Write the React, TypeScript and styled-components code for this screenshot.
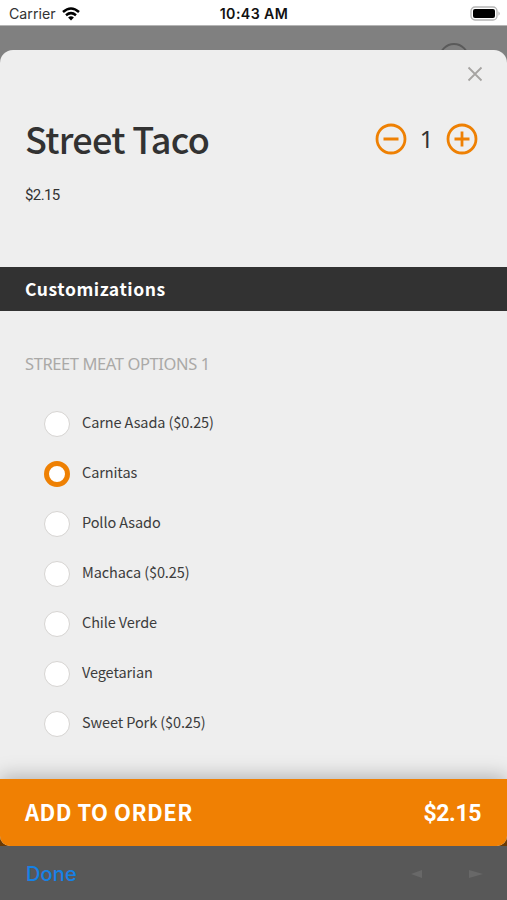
import React, { useState } from "react";
import styled, { createGlobalStyle } from "styled-components";

const GlobalStyle = createGlobalStyle`
  *, *::before, *::after { box-sizing: border-box; }
  body { margin: 0; background: #808080; font-family: "Noto Sans CJK SC", "Noto Sans", sans-serif; color: #323232; }
  button { font: inherit; border: 0; padding: 0; background: none; cursor: pointer; }
`;

const Screen = styled.div`
  width: 507px;
  height: 900px;
  display: flex;
  flex-direction: column;
  overflow: hidden;
  background: #808080;
`;

const StatusBar = styled.header`
  height: 26px;
  flex: none;
  display: grid;
  grid-template-columns: 1fr auto 1fr;
  align-items: center;
  padding: 2px 6px 0 9px;
  background: #fff;
  border-bottom: 1px solid #b5b5b5;
  color: #111;
  font: 14.2px/20px Inter, sans-serif;
`;

const Carrier = styled.div`
  display: flex;
  align-items: center;
  gap: 6px;
  color: #333;
`;

const Clock = styled.div`
  padding-right: 2px;
  font-weight: 600;
  letter-spacing: 0.4px;
`;

const BatteryIcon = styled.svg`
  justify-self: end;
`;

const Backdrop = styled.div`
  height: 24px;
  flex: none;
  padding-left: 439px;
  overflow: hidden;
`;

const BackdropRing = styled.div`
  width: 30px;
  height: 30px;
  margin-top: 17px;
  border: 2px solid #5a5a5a;
  border-radius: 50%;
`;

const SheetCorners = styled.div`
  flex: none;
  background: linear-gradient(#808080 0 50%, #6a3a05 50%);
`;

const Sheet = styled.main`
  height: 796px;
  display: flex;
  flex-direction: column;
  overflow: hidden;
  border-radius: 13px 13px 10px 10px;
  background: #eee;
`;

const CloseRow = styled.div`
  display: flex;
  justify-content: flex-end;
  height: 56px;
  padding: 16px 24px 0 0;
`;

const CloseButton = styled.button`
  width: 16px;
  height: 16px;
  svg { display: block; }
`;

const ItemHeader = styled.section`
  display: flex;
  justify-content: space-between;
  align-items: center;
  height: 66px;
  padding: 0 29px 0 25px;
`;

const Title = styled.h1`
  margin: 0;
  padding-bottom: 3px;
  font-size: 36px;
  line-height: 46px;
  font-weight: 500;
  letter-spacing: -0.7px;
`;

const Stepper = styled.div`
  display: flex;
  align-items: center;
  gap: 14px;
`;

const StepButton = styled.button`
  width: 32px;
  height: 32px;
  svg { display: block; }
`;

const Quantity = styled.span`
  width: 11px;
  display: flex;
  justify-content: center;
  font-family: "Noto Sans", sans-serif;
  font-size: 24px;
  line-height: 30px;
`;

const ItemPrice = styled.div`
  height: 95px;
  padding: 13px 25px 0;
  font-family: Roboto, sans-serif;
  font-size: 15px;
  line-height: 20px;
  letter-spacing: -0.6px;
`;

const SectionBar = styled.h2`
  height: 44px;
  flex: none;
  margin: 0;
  padding-left: 25px;
  background: #323232;
  color: #fff;
  font-size: 17.5px;
  line-height: 44px;
  font-weight: 700;
  letter-spacing: 0.55px;
`;

const GroupTitle = styled.h3`
  margin: 42px 0 25px 25px;
  color: #aaa9a7;
  font-family: "Noto Sans", sans-serif;
  font-size: 16.5px;
  line-height: 21px;
  font-weight: 400;
  letter-spacing: -0.4px;
`;

const Options = styled.div`
  display: flex;
  flex-direction: column;
`;

const Option = styled.button`
  display: flex;
  align-items: center;
  height: 50px;
  padding-left: 44px;
  gap: 12px;
  color: #3c3c3c;
  text-align: left;
`;

const Radio = styled.span<{ $selected: boolean }>`
  width: 26px;
  height: 26px;
  border: ${({ $selected }) => ($selected ? "5.5px solid #ee8003" : "1.5px solid #d6d4d2")};
  border-radius: 50%;
  background: #fff;
`;

const OptionLabel = styled.span`
  padding-bottom: 4px;
  font-size: 14.5px;
  line-height: 20px;
  letter-spacing: -0.1px;
`;

const OrderButton = styled.button`
  display: flex;
  justify-content: space-between;
  align-items: center;
  height: 67px;
  flex: none;
  margin-top: auto;
  padding: 0 26px 0 25px;
  background: #f08003;
  box-shadow: 0 -3px 18px rgba(0, 0, 0, 0.25);
  color: #fff;
  font-size: 22px;
  font-weight: 700;
`;

const OrderLabel = styled.span`
  padding-bottom: 3px;
  letter-spacing: 0.5px;
`;

const OrderTotal = styled.span`
  padding-top: 1px;
  font-family: Roboto, sans-serif;
  font-size: 23px;
  letter-spacing: -0.4px;
`;

const InputBar = styled.footer`
  height: 54px;
  flex: none;
  display: flex;
  justify-content: space-between;
  align-items: center;
  padding: 0 24px 0 26px;
  background: #585858;
`;

const DoneButton = styled.button`
  padding-top: 1px;
  color: #1681e6;
  font-family: Inter, sans-serif;
  font-size: 20px;
  font-weight: 500;
  letter-spacing: 0.15px;
`;

const options = [
  "Carne Asada ($0.25)",
  "Carnitas",
  "Pollo Asado",
  "Machaca ($0.25)",
  "Chile Verde",
  "Vegetarian",
  "Sweet Pork ($0.25)",
];

const StepIcon = ({ plus = false }: { plus?: boolean }) => (
  <svg width="32" height="32" viewBox="0 0 32 32" fill="none" stroke="#ee8003" strokeWidth="2.8">
    <circle cx="16" cy="16" r="14" />
    <path d={plus ? "M8.5 16h15M16 8.5v15" : "M8.5 16h15"} />
  </svg>
);

export default function App() {
  const [selected, setSelected] = useState(1);
  const [count, setCount] = useState(1);

  return (
    <>
      <GlobalStyle />
      <Screen>
        <StatusBar>
          <Carrier>
            <span>Carrier</span>
            <svg width="18" height="14" viewBox="0 0 18 14" fill="none" stroke="#000" strokeWidth="2.5">
              <path d="M1 5Q9-2 17 5M4 8.2Q9 4 14 8.2" />
              <path d="M6.1 10.4Q9 8.2 11.9 10.4L9 13.4Z" fill="#000" stroke="none" />
            </svg>
          </Carrier>
          <Clock>10:43 AM</Clock>
          <BatteryIcon width="31" height="15" viewBox="0 0 31 15">
            <rect x="1" y="1" width="26" height="13" rx="4" fill="#fff" stroke="#b5b5b5" strokeWidth="1.3" />
            <rect x="3" y="3" width="22" height="9" rx="2" fill="#000" />
            <path d="M28.5 5.2q2.4 2.3 0 4.6Z" fill="#aaa" />
          </BatteryIcon>
        </StatusBar>
        <Backdrop><BackdropRing /></Backdrop>
        <SheetCorners>
          <Sheet>
            <CloseRow>
              <CloseButton aria-label="Close">
                <svg width="16" height="16" viewBox="0 0 16 16" stroke="#a6a4a2" strokeWidth="1.8">
                  <path d="M1.5 1.5l13 13M14.5 1.5l-13 13" />
                </svg>
              </CloseButton>
            </CloseRow>
            <ItemHeader>
              <Title>Street Taco</Title>
              <Stepper>
                <StepButton aria-label="Remove one" onClick={() => setCount(Math.max(1, count - 1))}><StepIcon /></StepButton>
                <Quantity>{count}</Quantity>
                <StepButton aria-label="Add one" onClick={() => setCount(count + 1)}><StepIcon plus /></StepButton>
              </Stepper>
            </ItemHeader>
            <ItemPrice>$2.15</ItemPrice>
            <SectionBar>Customizations</SectionBar>
            <GroupTitle>STREET MEAT OPTIONS 1</GroupTitle>
            <Options role="radiogroup">
              {options.map((option, index) => (
                <Option key={option} role="radio" aria-checked={index === selected} onClick={() => setSelected(index)}>
                  <Radio $selected={index === selected} />
                  <OptionLabel>{option}</OptionLabel>
                </Option>
              ))}
            </Options>
            <OrderButton>
              <OrderLabel>ADD TO ORDER</OrderLabel>
              <OrderTotal>$2.15</OrderTotal>
            </OrderButton>
          </Sheet>
        </SheetCorners>
        <InputBar>
          <DoneButton>Done</DoneButton>
          <svg width="72" height="12" viewBox="0 0 72 12" fill="#686868">
            <path d="M0 7L11 3v8ZM58 3l14 4-14 4Z" />
          </svg>
        </InputBar>
      </Screen>
    </>
  );
}
